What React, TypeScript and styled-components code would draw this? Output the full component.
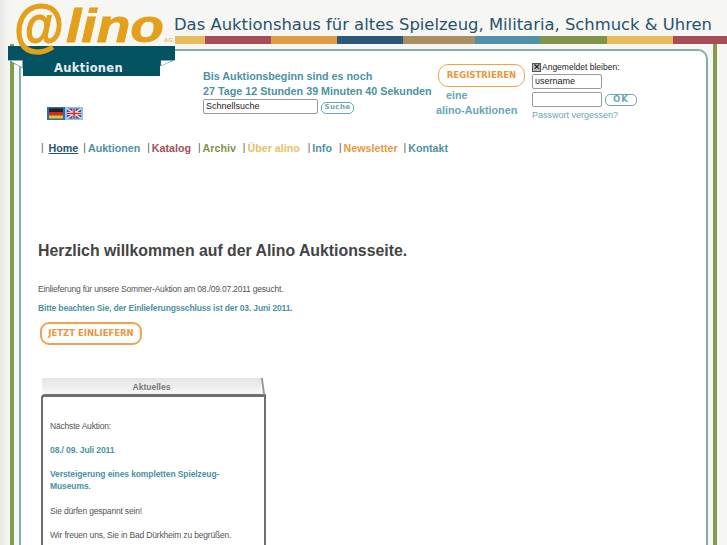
import React from "react";
import styled, { createGlobalStyle } from "styled-components";

const teal = "#4b93a2";
const orange = "#e8983f";
const borderTeal = "#86adab";

const GlobalStyle = createGlobalStyle`
  html, body {
    margin: 0;
    padding: 0;
    background: #f6f6f3;
    overflow: hidden;
  }
  * { box-sizing: border-box; }
`;

const Page = styled.div`
  position: relative;
  width: 727px;
  height: 545px;
  overflow: hidden;
  background: linear-gradient(90deg, #e8e8e6, #f6f6f3 10px);
  font-family: "Liberation Sans", Arial, sans-serif;
`;

const Banner = styled.div`
  height: 36px;
  padding: 14px 0 0 174px;
  font: 16.4px/22px "DejaVu Sans", sans-serif;
  color: #27536f;
  white-space: nowrap;
`;

const Stripes = styled.div`
  display: flex;
  height: 8px;
  margin-left: 175px;
`;

const Stripe = styled.div<{ $w: number; $c: string }>`
  flex: 0 0 ${(p) => p.$w}px;
  background: ${(p) => p.$c};
`;

const Frame = styled.div`
  display: flex;
  padding-left: 10px;
`;

const GreenBar = styled.div`
  flex: 0 0 3.5px;
  height: 520px;
  background: #86994f;
`;

const Panel = styled.div`
  flex: 0 0 689px;
  height: 600px;
  margin: 5px 5px 0 5.5px;
  padding-top: 14px;
  background: #fff;
  border: 2px solid ${borderTeal};
  border-bottom: 0;
  border-top-right-radius: 10px;
`;

const TopRow = styled.div`
  display: flex;
  height: 74px;
`;

const Flags = styled.div`
  display: flex;
  flex: 0 0 182px;
  padding: 42px 0 0 26px;
`;

const Flag = styled.svg`
  display: block;
  width: 18px;
  height: 13px;
`;

const Countdown = styled.div`
  flex: 0 0 234px;
  padding-top: 4px;
`;

const CountLine = styled.div`
  font: bold 10.75px/15px "Liberation Sans", Arial, sans-serif;
  color: ${teal};
  white-space: nowrap;
`;

const SearchRow = styled.div`
  display: flex;
  align-items: flex-end;
  gap: 3px;
`;

const TextField = styled.div<{ $w: number }>`
  width: ${(p) => p.$w}px;
  height: 15px;
  padding-left: 2px;
  background: #fff;
  border: 1px solid #9a9a9a;
  border-radius: 2px;
  font: 9px/13px "Liberation Sans", Arial, sans-serif;
  color: #222;
`;

const SmallButton = styled.div<{ $w: number; $big?: boolean }>`
  width: ${(p) => p.$w}px;
  height: 12px;
  border: 1.5px solid #6fa6b4;
  border-radius: 5px;
  text-align: center;
  font: bold ${(p) => (p.$big ? "8.5px" : "7px")}/8px "DejaVu Sans", sans-serif;
  letter-spacing: ${(p) => (p.$big ? "1px" : "0.4px")};
  color: #6fa6b4;
`;

const RegisterColumn = styled.div`
  flex: 0 0 96px;
  margin-top: -1px;
  margin-left: -1px;
`;

const RegisterButton = styled.div`
  width: 87px;
  height: 23px;
  margin-left: 2px;
  border: 1.5px solid #f2a24f;
  border-radius: 10px;
  text-align: center;
  font: bold 8.5px/20px "DejaVu Sans", sans-serif;
  color: ${orange};
`;

const MyLinks = styled.div`
  padding-top: 1px;
  font: bold 10.75px/15px "Liberation Sans", Arial, sans-serif;
  color: #6aa6b3;
  white-space: nowrap;
`;

const MyFirst = styled.div`
  padding-left: 10px;
`;

const LoginColumn = styled.div`
  margin-top: -1px;
`;

const RememberRow = styled.div`
  display: flex;
  align-items: center;
  height: 7px;
  font: 8.5px/11px "Liberation Sans", Arial, sans-serif;
  color: #222;
`;

const CheckBox = styled.div`
  width: 9px;
  height: 9px;
  margin-right: 1px;
  background: #bbb;
  border: 1px solid #555;
  color: #000;
  font: bold 9px/7px "DejaVu Sans", sans-serif;
  text-align: center;
`;

const LoginField = styled(TextField)`
  margin-top: 3px;
`;

const PasswordRow = styled.div`
  display: flex;
  align-items: flex-end;
  gap: 3px;
`;

const OkSlot = styled.div`
  margin-bottom: 1px;
`;

const Forgot = styled.div`
  margin-top: 2px;
  font: 9px/12px "Liberation Sans", Arial, sans-serif;
  color: #6aa6b3;
`;

const Nav = styled.nav`
  display: flex;
  height: 18px;
  margin: 0 0 0 20px;
  font: bold 10.7px/18px "Liberation Sans", Arial, sans-serif;
  white-space: nowrap;
`;

const NavBar = styled.span<{ $g: number; $after: number }>`
  margin-left: ${(p) => p.$g}px;
  margin-right: ${(p) => p.$after}px;
  font-weight: normal;
  font-size: 10px;
  color: #555;
`;

const NavLink = styled.a<{ $c: string; $active?: boolean }>`
  color: ${(p) => p.$c};
  text-decoration: ${(p) => (p.$active ? "underline" : "none")};
`;

const Content = styled.div`
  padding: 84px 0 0 17px;
`;

const Welcome = styled.h1`
  margin: 0;
  font: bold 15.83px/20px "Liberation Sans", Arial, sans-serif;
  color: #444;
`;

const Intro = styled.p`
  margin: 22px 0 0;
  font: 8.5px/12px "Liberation Sans", Arial, sans-serif;
  letter-spacing: -0.2px;
  color: #555;
`;

const Notice = styled.p`
  margin: 7px 0 0;
  font: bold 8.5px/12px "Liberation Sans", Arial, sans-serif;
  letter-spacing: -0.15px;
  color: ${teal};
`;

const DeliverButton = styled.div`
  width: 102px;
  height: 23px;
  margin: 8px 0 0 2px;
  border: 2px solid #f2a24f;
  border-radius: 9px;
  text-align: center;
  font: bold 8.5px/19px "DejaVu Sans", sans-serif;
  color: ${orange};
`;

const NewsTab = styled.div`
  position: relative;
  width: 219px;
  height: 16px;
  margin: 33px 0 0 4px;
  background: linear-gradient(#e4e4e4, #f7f7f7);
  text-align: center;
  font: bold 8.5px/19px "Liberation Sans", Arial, sans-serif;
  color: #777;

  &::after {
    content: "";
    position: absolute;
    top: 0;
    right: -3px;
    width: 2px;
    height: 17px;
    background: #999;
    transform: skewX(8deg);
  }
`;

const NewsBox = styled.div`
  width: 225px;
  min-height: 220px;
  margin-left: 3px;
  padding: 23px 12px 0 7px;
  border: 2px solid #6e6e6e;
  border-top-width: 3px;
  border-bottom: 0;
  border-top-left-radius: 4px;
  font: 8.5px/12px "Liberation Sans", Arial, sans-serif;
  letter-spacing: -0.18px;
  color: #555;
`;

const NewsLine = styled.p`
  margin: 0 0 12.2px;
`;

const NewsStrong = styled.strong`
  letter-spacing: -0.1px;
  color: ${teal};
`;

const Logo = styled.svg`
  position: absolute;
  top: 0;
  left: 0;
  width: 180px;
  height: 80px;
`;

const stripes = [
  { w: 30, c: "#e6bd5a" },
  { w: 66, c: "#a94c5a" },
  { w: 66, c: "#e09c42" },
  { w: 66, c: "#2a5a78" },
  { w: 72, c: "#a98f64" },
  { w: 65, c: "#5192a8" },
  { w: 67, c: "#7f9349" },
  { w: 66, c: "#e6bd5a" },
  { w: 54, c: "#a94c5a" },
];

const navItems = [
  { label: "Home", color: "#27536f", gap: 0, after: 5, active: true },
  { label: "Auktionen", color: teal, gap: 5, after: 2 },
  { label: "Katalog", color: "#a94c5a", gap: 7, after: 2 },
  { label: "Archiv", color: "#7f9349", gap: 7, after: 2 },
  { label: "Über alino", color: "#e8bf66", gap: 7, after: 2 },
  { label: "Info", color: teal, gap: 8, after: 2 },
  { label: "Newsletter", color: orange, gap: 7, after: 2 },
  { label: "Kontakt", color: teal, gap: 6, after: 2 },
];

function AlinoLogo() {
  return (
    <Logo viewBox="0 0 180 80">
      <polygon points="8,46 175,46 175,60 160,66 160,76 23,76 23,68 8,60" fill="#035261" />
      <polygon points="9.5,60.5 22.5,60.5 22.5,68" fill="#fff" stroke="#86adab" />
      <polygon points="161,60.5 173,60.5 161,66" fill="#fff" stroke="#86adab" strokeWidth="0.6" />
      <text x="14" y="45" fontFamily="Liberation Sans" fontWeight="bold" fontSize="58" fill="#e3a01b" stroke="#e3a01b" strokeWidth="1.2" textLength="50" lengthAdjust="spacingAndGlyphs">
        @
      </text>
      <text x="66" y="42" fontFamily="Liberation Sans" fontStyle="italic" fontWeight="bold" fontSize="47" fill="#e3a01b" stroke="#e3a01b" strokeWidth="0.8" textLength="98" lengthAdjust="spacingAndGlyphs">
        lino
      </text>
      <text x="164" y="42" fontFamily="Liberation Sans" fontWeight="bold" fontSize="6" fill="#e8c070">
        AG
      </text>
      <text x="54" y="71.5" fontFamily="DejaVu Sans" fontWeight="bold" fontSize="11.5" letterSpacing="0.3" fill="#e8eeee">
        Auktionen
      </text>
    </Logo>
  );
}

export default function App() {
  return (
    <Page>
      <GlobalStyle />
      <Banner>Das Auktionshaus für altes Spielzeug, Militaria, Schmuck &amp; Uhren</Banner>
      <Stripes>
        {stripes.map((s, i) => (
          <Stripe key={i} $w={s.w} $c={s.c} />
        ))}
      </Stripes>
      <Frame>
        <GreenBar />
        <Panel>
          <TopRow>
            <Flags>
              <Flag viewBox="0 0 18 13">
                <rect width="18" height="13" fill="#2c6fb0" />
                <rect x="2" y="1.5" width="14" height="3.5" fill="#222" />
                <rect x="2" y="5" width="14" height="3.5" fill="#d8261c" />
                <rect x="2" y="8.5" width="14" height="3" fill="#e8c21c" />
              </Flag>
              <Flag viewBox="0 0 18 13">
                <rect width="18" height="13" fill="#8fc3e8" />
                <rect x="2" y="1.5" width="14" height="10" fill="#3c4f9a" />
                <path d="M2 1.5 L16 11.5 M16 1.5 L2 11.5" stroke="#eee" strokeWidth="1.5" />
                <path d="M9 1.5 V11.5 M2 6.5 H16" stroke="#eee" strokeWidth="3" />
                <path d="M9 1.5 V11.5 M2 6.5 H16" stroke="#d8261c" strokeWidth="1.5" />
              </Flag>
            </Flags>
            <Countdown>
              <CountLine>Bis Auktionsbeginn sind es noch</CountLine>
              <CountLine>27 Tage 12 Stunden 39 Minuten 40 Sekunden</CountLine>
              <SearchRow>
                <TextField $w={115}>Schnellsuche</TextField>
                <SmallButton $w={33}>Suche</SmallButton>
              </SearchRow>
            </Countdown>
            <RegisterColumn>
              <RegisterButton>REGISTRIEREN</RegisterButton>
              <MyLinks>
                <MyFirst>eine</MyFirst>
                <div>alino-Auktionen</div>
              </MyLinks>
            </RegisterColumn>
            <LoginColumn>
              <RememberRow>
                <CheckBox>✕</CheckBox>
                Angemeldet bleiben:
              </RememberRow>
              <LoginField $w={70}>username</LoginField>
              <PasswordRow>
                <LoginField $w={70} />
                <OkSlot>
                  <SmallButton $w={32} $big>
                    OK
                  </SmallButton>
                </OkSlot>
              </PasswordRow>
              <Forgot>Passwort vergessen?</Forgot>
            </LoginColumn>
          </TopRow>
          <Nav>
            {navItems.map((n) => (
              <React.Fragment key={n.label}>
                <NavBar $g={n.gap} $after={n.after}>
                  |
                </NavBar>
                <NavLink href="#" $c={n.color} $active={n.active}>
                  {n.label}
                </NavLink>
              </React.Fragment>
            ))}
          </Nav>
          <Content>
            <Welcome>Herzlich willkommen auf der Alino Auktionsseite.</Welcome>
            <Intro>Einlieferung für unsere Sommer-Auktion am 08./09.07.2011 gesucht.</Intro>
            <Notice>Bitte beachten Sie, der Einlieferungsschluss ist der 03. Juni 2011.</Notice>
            <DeliverButton>JETZT EINLIEFERN</DeliverButton>
            <NewsTab>Aktuelles</NewsTab>
            <NewsBox>
              <NewsLine>Nächste Auktion:</NewsLine>
              <NewsLine>
                <NewsStrong>08./ 09. Juli 2011</NewsStrong>
              </NewsLine>
              <NewsLine>
                <NewsStrong>Versteigerung eines kompletten Spielzeug-Museums</NewsStrong>.
              </NewsLine>
              <NewsLine>Sie dürfen gespannt sein!</NewsLine>
              <NewsLine>Wir freuen uns, Sie in Bad Dürkheim zu begrüßen.</NewsLine>
            </NewsBox>
          </Content>
        </Panel>
        <GreenBar />
      </Frame>
      <AlinoLogo />
    </Page>
  );
}
